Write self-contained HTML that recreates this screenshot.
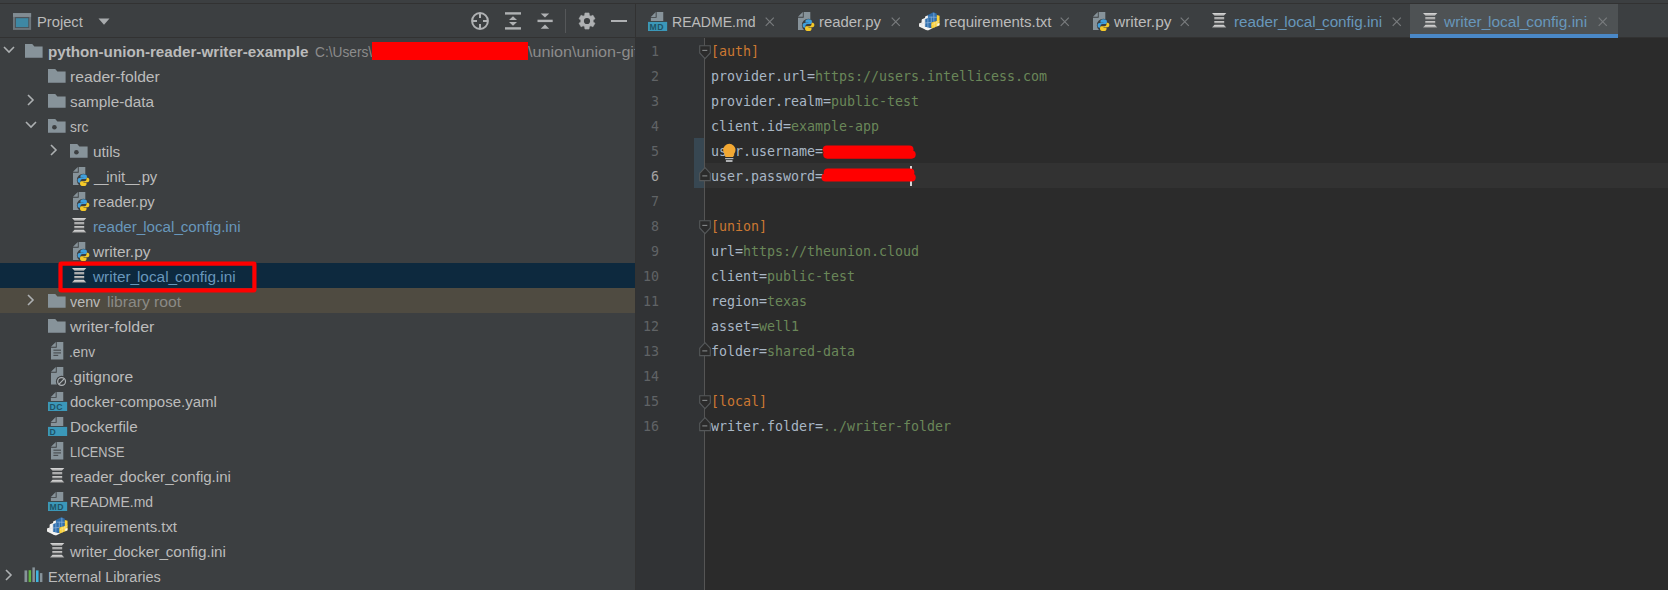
<!DOCTYPE html>
<html lang="en"><head><meta charset="utf-8"><title>PyCharm - writer_local_config.ini</title>
<style>
html,body{margin:0;padding:0}
body{width:1668px;height:590px;overflow:hidden;background:#3c3f41;position:relative;font:15.5px "Liberation Sans",sans-serif;}
.a{position:absolute;display:block}
.t{position:absolute;white-space:pre;font:15.5px "Liberation Sans",sans-serif;line-height:25px;height:25px;transform-origin:0 0}
.ln{position:absolute;left:636px;width:23px;text-align:right;font:13.3px "DejaVu Sans Mono","Liberation Mono",monospace;line-height:25px;height:25px;letter-spacing:-0.006px}
.code{position:absolute;left:711px;white-space:pre;font:13.3px "DejaVu Sans Mono","Liberation Mono",monospace;line-height:25px;height:25px;letter-spacing:-0.006px}
</style></head>
<body>
<div class="a" style="left:0;top:3px;width:1668px;height:1px;background:#323232"></div>
<div class="a" style="left:0;top:37px;width:1668px;height:1px;background:#323232"></div>
<div class="a" style="left:0;top:263px;width:635px;height:25px;background:#0d293e"></div>
<div class="a" style="left:0;top:288px;width:635px;height:25px;background:#4f4b41"></div>
<div class="a" style="left:372px;top:41.8px;width:156px;height:18px;background:#ff0000"></div>
<div class="a" style="left:528px;top:38px;width:106.5px;height:25px;overflow:hidden"><span class="t" style="left:0;top:1px;color:#8c8c8c;transform:scaleX(1.042)">\union\union-git</span></div>
<div class="a" style="left:635px;top:4px;width:1px;height:586px;background:#323232"></div>
<div class="a" style="left:636px;top:38px;width:68px;height:552px;background:#313335"></div>
<div class="a" style="left:705px;top:38px;width:963px;height:552px;background:#2b2b2b"></div>
<div class="a" style="left:704px;top:38px;width:1px;height:552px;background:#555555"></div>
<div class="a" style="left:705px;top:163px;width:963px;height:25px;background:#323232"></div>
<div class="a" style="left:694px;top:138px;width:10px;height:50px;background:#374752"></div>
<div class="a" style="left:1410px;top:4px;width:208px;height:34px;background:#4e5254"></div>
<div class="a" style="left:1410px;top:34px;width:208px;height:4px;background:#4a88c7"></div>
<svg class="a" style="left:13px;top:13px" width="19" height="17" viewBox="0 0 19 17"><rect x="0" y="0.1" width="18.1" height="16.8" fill="#6d767c"/><rect x="0" y="0.1" width="18.1" height="3.8" fill="#818c93"/><rect x="1.9" y="4.1" width="14.3" height="10.9" fill="#4b5257"/><rect x="2.9" y="5.2" width="12.4" height="8.9" fill="#3e88a4"/></svg>
<svg class="a" style="left:98px;top:18px" width="12" height="7" viewBox="0 0 12 7"><path d="M0.5 0.5H11.5L6 6.8Z" fill="#a8abad"/></svg>
<svg class="a" style="left:470px;top:11px" width="20" height="20" viewBox="0 0 20 20"><circle cx="10" cy="10" r="7.9" fill="none" stroke="#afb1b3" stroke-width="2"/><path d="M10 2V7M10 13V18M2 10H7M13 10H18" stroke="#afb1b3" stroke-width="2"/></svg>
<svg class="a" style="left:505px;top:12px" width="16" height="18" viewBox="0 0 16 18"><rect x="0" y="0.2" width="16" height="2.4" fill="#afb1b3"/><rect x="0" y="15.2" width="16" height="2.4" fill="#afb1b3"/><path d="M8 4.3L12 8H4Z" fill="#afb1b3"/><path d="M4 10H12L8 13.7Z" fill="#afb1b3"/></svg>
<svg class="a" style="left:537px;top:13px" width="16" height="16" viewBox="0 0 16 16"><rect x="0.5" y="6.7" width="15.2" height="2.4" fill="#afb1b3"/><path d="M3.7 0.5H12.2L8 4.6Z" fill="#afb1b3"/><path d="M8 11.5L12.2 15.8H3.7Z" fill="#afb1b3"/></svg>
<div class="a" style="left:565px;top:9px;width:1px;height:24px;background:#555759"></div>
<svg class="a" style="left:578px;top:12px" width="18" height="18" viewBox="0 0 18 18"><path d="M6.95 0.96L11.05 0.96L11.3 3.24L12.84 4.13L14.94 3.2L16.99 6.76L15.14 8.11L15.14 9.89L16.99 11.24L14.94 14.8L12.84 13.87L11.3 14.76L11.05 17.04L6.95 17.04L6.7 14.76L5.16 13.87L3.06 14.8L1.01 11.24L2.86 9.89L2.86 8.11L1.01 6.76L3.06 3.2L5.16 4.13L6.7 3.24Z" fill="#afb1b3" stroke="#afb1b3" stroke-width="0.6" stroke-linejoin="round"/><circle cx="9" cy="9" r="3.1" fill="#3c3f41"/></svg>
<div class="a" style="left:611.4px;top:19.6px;width:15.3px;height:2.4px;background:#afb1b3"></div>
<svg class="a" style="left:2.8px;top:46px" width="12" height="8" viewBox="0 0 12 8"><path d="M1 1L6 6L11 1" fill="none" stroke="#adb0b2" stroke-width="1.6"/></svg>
<svg class="a" style="left:25.2px;top:43.8px" width="18" height="14" viewBox="0 0 18 14"><path d="M0 0H7.2L9.4 2.6H17.6V13.8H0Z" fill="#87939a"/></svg>
<svg class="a" style="left:48.2px;top:68.8px" width="18" height="14" viewBox="0 0 18 14"><path d="M0 0H7.2L9.4 2.6H17.6V13.8H0Z" fill="#87939a"/></svg>
<svg class="a" style="left:26.5px;top:94px" width="8" height="12" viewBox="0 0 8 12"><path d="M1 1L6 6L1 11" fill="none" stroke="#adb0b2" stroke-width="1.6"/></svg>
<svg class="a" style="left:48.2px;top:93.8px" width="18" height="14" viewBox="0 0 18 14"><path d="M0 0H7.2L9.4 2.6H17.6V13.8H0Z" fill="#87939a"/></svg>
<svg class="a" style="left:24.8px;top:121.2px" width="12" height="8" viewBox="0 0 12 8"><path d="M1 1L6 6L11 1" fill="none" stroke="#adb0b2" stroke-width="1.6"/></svg>
<svg class="a" style="left:48.2px;top:118.8px" width="18" height="14" viewBox="0 0 18 14"><path d="M0 0H7.2L9.4 2.6H17.6V13.8H0Z" fill="#87939a"/><circle cx="6.4" cy="8.2" r="2.3" fill="#3c3f41"/></svg>
<svg class="a" style="left:49.5px;top:144px" width="8" height="12" viewBox="0 0 8 12"><path d="M1 1L6 6L1 11" fill="none" stroke="#adb0b2" stroke-width="1.6"/></svg>
<svg class="a" style="left:70.4px;top:143.8px" width="18" height="14" viewBox="0 0 18 14"><path d="M0 0H7.2L9.4 2.6H17.6V13.8H0Z" fill="#87939a"/><circle cx="6.4" cy="8.2" r="2.3" fill="#3c3f41"/></svg>
<svg class="a" style="left:72.9px;top:167px" width="18" height="20" viewBox="0 0 18 20"><path d="M5.7 0H12.3V18H0V5.7H5.7Z" fill="#87939a"/><path d="M4.8 0V4.8H0Z" fill="#87939a"/><circle cx="10.4" cy="13.2" r="6.5" fill="#3c3f41"/><g transform="translate(4.6 7.2) scale(0.98)"><path d="M5.9 0C3.5 0 2.9 1 2.9 2.1V3.5H6V4H1.9C0.6 4 0 5 0 6.2C0 7.7 0.7 8.6 1.9 8.6H2.9V7C2.9 5.9 3.8 5 5 5H7.9C8.8 5 9.5 4.3 9.5 3.4V2.1C9.5 1 8.5 0 5.9 0Z" fill="#3f9fdc"/><path d="M5.9 0C3.5 0 2.9 1 2.9 2.1V3.5H6V4H1.9C0.6 4 0 5 0 6.2C0 7.7 0.7 8.6 1.9 8.6H2.9V7C2.9 5.9 3.8 5 5 5H7.9C8.8 5 9.5 4.3 9.5 3.4V2.1C9.5 1 8.5 0 5.9 0Z" fill="#f5c928" transform="rotate(180 6 6.05)"/></g></svg>
<svg class="a" style="left:72.9px;top:192px" width="18" height="20" viewBox="0 0 18 20"><path d="M5.7 0H12.3V18H0V5.7H5.7Z" fill="#87939a"/><path d="M4.8 0V4.8H0Z" fill="#87939a"/><circle cx="10.4" cy="13.2" r="6.5" fill="#3c3f41"/><g transform="translate(4.6 7.2) scale(0.98)"><path d="M5.9 0C3.5 0 2.9 1 2.9 2.1V3.5H6V4H1.9C0.6 4 0 5 0 6.2C0 7.7 0.7 8.6 1.9 8.6H2.9V7C2.9 5.9 3.8 5 5 5H7.9C8.8 5 9.5 4.3 9.5 3.4V2.1C9.5 1 8.5 0 5.9 0Z" fill="#3f9fdc"/><path d="M5.9 0C3.5 0 2.9 1 2.9 2.1V3.5H6V4H1.9C0.6 4 0 5 0 6.2C0 7.7 0.7 8.6 1.9 8.6H2.9V7C2.9 5.9 3.8 5 5 5H7.9C8.8 5 9.5 4.3 9.5 3.4V2.1C9.5 1 8.5 0 5.9 0Z" fill="#f5c928" transform="rotate(180 6 6.05)"/></g></svg>
<svg class="a" style="left:71.8px;top:218.2px" width="15" height="15" viewBox="0 0 15 15"><defs><linearGradient id="ig" x1="0" y1="0" x2="0" y2="1"><stop offset="0" stop-color="#d2d2d2"/><stop offset="1" stop-color="#8e8e8e"/></linearGradient><linearGradient id="ih" x1="0" y1="0" x2="0" y2="1"><stop offset="0" stop-color="#dcdcdc"/><stop offset="1" stop-color="#a4a4a4"/></linearGradient></defs><path d="M0 0H14.3L11.8 2.7H2.5Z" fill="url(#ih)"/><rect x="2.3" y="4.2" width="9.9" height="2.3" fill="url(#ig)"/><rect x="2.3" y="8" width="9.9" height="2.3" fill="url(#ig)"/><path d="M2.5 11.8H11.8L14.3 14.5H0Z" fill="url(#ih)"/></svg>
<svg class="a" style="left:72.9px;top:242px" width="18" height="20" viewBox="0 0 18 20"><path d="M5.7 0H12.3V18H0V5.7H5.7Z" fill="#87939a"/><path d="M4.8 0V4.8H0Z" fill="#87939a"/><circle cx="10.4" cy="13.2" r="6.5" fill="#3c3f41"/><g transform="translate(4.6 7.2) scale(0.98)"><path d="M5.9 0C3.5 0 2.9 1 2.9 2.1V3.5H6V4H1.9C0.6 4 0 5 0 6.2C0 7.7 0.7 8.6 1.9 8.6H2.9V7C2.9 5.9 3.8 5 5 5H7.9C8.8 5 9.5 4.3 9.5 3.4V2.1C9.5 1 8.5 0 5.9 0Z" fill="#3f9fdc"/><path d="M5.9 0C3.5 0 2.9 1 2.9 2.1V3.5H6V4H1.9C0.6 4 0 5 0 6.2C0 7.7 0.7 8.6 1.9 8.6H2.9V7C2.9 5.9 3.8 5 5 5H7.9C8.8 5 9.5 4.3 9.5 3.4V2.1C9.5 1 8.5 0 5.9 0Z" fill="#f5c928" transform="rotate(180 6 6.05)"/></g></svg>
<svg class="a" style="left:71.8px;top:268.2px" width="15" height="15" viewBox="0 0 15 15"><defs><linearGradient id="ig" x1="0" y1="0" x2="0" y2="1"><stop offset="0" stop-color="#d2d2d2"/><stop offset="1" stop-color="#8e8e8e"/></linearGradient><linearGradient id="ih" x1="0" y1="0" x2="0" y2="1"><stop offset="0" stop-color="#dcdcdc"/><stop offset="1" stop-color="#a4a4a4"/></linearGradient></defs><path d="M0 0H14.3L11.8 2.7H2.5Z" fill="url(#ih)"/><rect x="2.3" y="4.2" width="9.9" height="2.3" fill="url(#ig)"/><rect x="2.3" y="8" width="9.9" height="2.3" fill="url(#ig)"/><path d="M2.5 11.8H11.8L14.3 14.5H0Z" fill="url(#ih)"/></svg>
<svg class="a" style="left:26.5px;top:294px" width="8" height="12" viewBox="0 0 8 12"><path d="M1 1L6 6L1 11" fill="none" stroke="#adb0b2" stroke-width="1.6"/></svg>
<svg class="a" style="left:48.2px;top:293.8px" width="18" height="14" viewBox="0 0 18 14"><path d="M0 0H7.2L9.4 2.6H17.6V13.8H0Z" fill="#87939a"/></svg>
<svg class="a" style="left:48.2px;top:318.8px" width="18" height="14" viewBox="0 0 18 14"><path d="M0 0H7.2L9.4 2.6H17.6V13.8H0Z" fill="#87939a"/></svg>
<svg class="a" style="left:50.8px;top:342.2px" width="13" height="18" viewBox="0 0 13 18"><path d="M5.7 0H12.3V17.6H0V5.7H5.7Z" fill="#87939a"/><path d="M4.8 0V4.8H0Z" fill="#87939a"/><rect x="2.4" y="7.6" width="7.6" height="1.2" fill="#3c3f41" opacity=".8"/><rect x="2.4" y="10.3" width="7.6" height="1.2" fill="#3c3f41" opacity=".8"/><rect x="2.4" y="12.8" width="4.8" height="1.2" fill="#3c3f41" opacity=".8"/></svg>
<svg class="a" style="left:50.8px;top:367.2px" width="17" height="21" viewBox="0 0 17 21"><path d="M5.7 0H12.3V17.6H0V5.7H5.7Z" fill="#87939a"/><path d="M4.8 0V4.8H0Z" fill="#87939a"/><circle cx="10.6" cy="14.5" r="5.7" fill="#3c3f41"/><circle cx="10.6" cy="14.5" r="3.9" fill="none" stroke="#aeb3b6" stroke-width="1.2"/><path d="M8 17.2L13.2 11.8" stroke="#aeb3b6" stroke-width="1.2"/></svg>
<svg class="a" style="left:48px;top:392.2px" width="20" height="19" viewBox="0 0 20 19"><path d="M8.6 0H15.25V8.9H2.85V5.7H8.6Z" fill="#87939a"/><path d="M7.7 0V4.9H2.85Z" fill="#87939a"/><rect x="0" y="9.9" width="19.15" height="9.1" fill="#3b98b9"/><text x="1.6" y="17.5" font-family="Liberation Sans, sans-serif" font-weight="bold" font-size="8.7" letter-spacing="0.35" fill="#1f5266">DC</text></svg>
<svg class="a" style="left:48px;top:417.2px" width="20" height="19" viewBox="0 0 20 19"><path d="M8.6 0H15.25V8.9H2.85V5.7H8.6Z" fill="#87939a"/><path d="M7.7 0V4.9H2.85Z" fill="#87939a"/><rect x="0" y="9.9" width="19.15" height="9.1" fill="#3b98b9"/><text x="1.6" y="17.5" font-family="Liberation Sans, sans-serif" font-weight="bold" font-size="8.7" letter-spacing="0.35" fill="#1f5266">D</text></svg>
<svg class="a" style="left:50.8px;top:442.2px" width="13" height="18" viewBox="0 0 13 18"><path d="M5.7 0H12.3V17.6H0V5.7H5.7Z" fill="#87939a"/><path d="M4.8 0V4.8H0Z" fill="#87939a"/><rect x="2.4" y="7.6" width="7.6" height="1.2" fill="#3c3f41" opacity=".8"/><rect x="2.4" y="10.3" width="7.6" height="1.2" fill="#3c3f41" opacity=".8"/><rect x="2.4" y="12.8" width="4.8" height="1.2" fill="#3c3f41" opacity=".8"/></svg>
<svg class="a" style="left:49.8px;top:468.2px" width="15" height="15" viewBox="0 0 15 15"><defs><linearGradient id="ig" x1="0" y1="0" x2="0" y2="1"><stop offset="0" stop-color="#d2d2d2"/><stop offset="1" stop-color="#8e8e8e"/></linearGradient><linearGradient id="ih" x1="0" y1="0" x2="0" y2="1"><stop offset="0" stop-color="#dcdcdc"/><stop offset="1" stop-color="#a4a4a4"/></linearGradient></defs><path d="M0 0H14.3L11.8 2.7H2.5Z" fill="url(#ih)"/><rect x="2.3" y="4.2" width="9.9" height="2.3" fill="url(#ig)"/><rect x="2.3" y="8" width="9.9" height="2.3" fill="url(#ig)"/><path d="M2.5 11.8H11.8L14.3 14.5H0Z" fill="url(#ih)"/></svg>
<svg class="a" style="left:48px;top:492.2px" width="20" height="19" viewBox="0 0 20 19"><path d="M8.6 0H15.25V8.9H2.85V5.7H8.6Z" fill="#87939a"/><path d="M7.7 0V4.9H2.85Z" fill="#87939a"/><rect x="0" y="9.9" width="19.15" height="9.1" fill="#3b98b9"/><text x="1.6" y="17.5" font-family="Liberation Sans, sans-serif" font-weight="bold" font-size="8.7" letter-spacing="0.35" fill="#1f5266">MD</text></svg>
<svg class="a" style="left:46.7px;top:516.8px" width="22" height="19" viewBox="0 0 22 19"><polygon points="0,11.44 2.75,10.38 2.97,7.2 5.93,5.93 6.36,4.24 9.32,3.18 9.32,16.53 7.63,18.22 0,14.41" fill="#f3f3f1"/><polygon points="5.93,14.41 12.29,15.89 13.14,16.53 8.9,18.43 5.93,16.95" fill="#f3f3f1"/><polygon points="8.9,2.97 14.41,0.21 17.8,1.69 17.8,8.9 12.29,10.59 12.29,16.1 5.93,14.83 5.93,7.2 8.9,5.93" fill="#2f6fad"/><polygon points="17.8,2.97 20.55,3.81 20.55,13.14 13.14,16.53 12.29,16.1 12.29,10.59 17.8,8.9" fill="#fbd23a"/><polygon points="18.22,11.86 20.42,11.1 20.42,13.14 18.22,14.32" fill="#f7f7f7"/><path d="M5.93,11.02L12.29,10.38M8.9,6.14V16.1M12.29,4.66V10.59M14.83,0.85V9.75M9.32,5.08L17.8,5.3" stroke="#8fb4dc" stroke-width="0.7" fill="none"/><path d="M15.25,9.75V15.47M17.8,8.9V14.41M12.29,13.14L20.55,8.9" stroke="#f0e2a0" stroke-width="0.6" fill="none"/><path d="M2.97,7.63V15.68M5.93,6.36V14.41M0,12.92L5.93,10.59" stroke="#dcdcdc" stroke-width="0.6" fill="none"/></svg>
<svg class="a" style="left:49.8px;top:543.2px" width="15" height="15" viewBox="0 0 15 15"><defs><linearGradient id="ig" x1="0" y1="0" x2="0" y2="1"><stop offset="0" stop-color="#d2d2d2"/><stop offset="1" stop-color="#8e8e8e"/></linearGradient><linearGradient id="ih" x1="0" y1="0" x2="0" y2="1"><stop offset="0" stop-color="#dcdcdc"/><stop offset="1" stop-color="#a4a4a4"/></linearGradient></defs><path d="M0 0H14.3L11.8 2.7H2.5Z" fill="url(#ih)"/><rect x="2.3" y="4.2" width="9.9" height="2.3" fill="url(#ig)"/><rect x="2.3" y="8" width="9.9" height="2.3" fill="url(#ig)"/><path d="M2.5 11.8H11.8L14.3 14.5H0Z" fill="url(#ih)"/></svg>
<svg class="a" style="left:4.5px;top:568.9px" width="8" height="12" viewBox="0 0 8 12"><path d="M1 1L6 6L1 11" fill="none" stroke="#adb0b2" stroke-width="1.6"/></svg>
<svg class="a" style="left:24.1px;top:566.7px" width="19" height="16" viewBox="0 0 19 16"><rect x="0.5" y="3.4" width="2.7" height="11.65" fill="#87939a"/><rect x="4.6" y="3.2" width="2.5" height="11.85" fill="#62b543"/><rect x="8.4" y="0.4" width="2.5" height="14.65" fill="#87939a"/><rect x="12" y="3.4" width="2.55" height="11.65" fill="#40b6e0"/><rect x="15.95" y="6.1" width="2.45" height="8.95" fill="#87939a"/></svg>
<svg class="a" style="left:648px;top:12.2px" width="20" height="19" viewBox="0 0 20 19"><path d="M8.6 0H15.25V8.9H2.85V5.7H8.6Z" fill="#87939a"/><path d="M7.7 0V4.9H2.85Z" fill="#87939a"/><rect x="0" y="9.9" width="19.15" height="9.1" fill="#3b98b9"/><text x="1.6" y="17.5" font-family="Liberation Sans, sans-serif" font-weight="bold" font-size="8.7" letter-spacing="0.35" fill="#1f5266">MD</text></svg>
<svg class="a" style="left:797.6px;top:12.2px" width="18" height="20" viewBox="0 0 18 20"><path d="M5.7 0H12.3V18H0V5.7H5.7Z" fill="#87939a"/><path d="M4.8 0V4.8H0Z" fill="#87939a"/><circle cx="10.4" cy="13.2" r="6.5" fill="#3c3f41"/><g transform="translate(4.6 7.2) scale(0.98)"><path d="M5.9 0C3.5 0 2.9 1 2.9 2.1V3.5H6V4H1.9C0.6 4 0 5 0 6.2C0 7.7 0.7 8.6 1.9 8.6H2.9V7C2.9 5.9 3.8 5 5 5H7.9C8.8 5 9.5 4.3 9.5 3.4V2.1C9.5 1 8.5 0 5.9 0Z" fill="#3f9fdc"/><path d="M5.9 0C3.5 0 2.9 1 2.9 2.1V3.5H6V4H1.9C0.6 4 0 5 0 6.2C0 7.7 0.7 8.6 1.9 8.6H2.9V7C2.9 5.9 3.8 5 5 5H7.9C8.8 5 9.5 4.3 9.5 3.4V2.1C9.5 1 8.5 0 5.9 0Z" fill="#f5c928" transform="rotate(180 6 6.05)"/></g></svg>
<svg class="a" style="left:918.5px;top:12.3px" width="22" height="19" viewBox="0 0 22 19"><polygon points="0,11.44 2.75,10.38 2.97,7.2 5.93,5.93 6.36,4.24 9.32,3.18 9.32,16.53 7.63,18.22 0,14.41" fill="#f3f3f1"/><polygon points="5.93,14.41 12.29,15.89 13.14,16.53 8.9,18.43 5.93,16.95" fill="#f3f3f1"/><polygon points="8.9,2.97 14.41,0.21 17.8,1.69 17.8,8.9 12.29,10.59 12.29,16.1 5.93,14.83 5.93,7.2 8.9,5.93" fill="#2f6fad"/><polygon points="17.8,2.97 20.55,3.81 20.55,13.14 13.14,16.53 12.29,16.1 12.29,10.59 17.8,8.9" fill="#fbd23a"/><polygon points="18.22,11.86 20.42,11.1 20.42,13.14 18.22,14.32" fill="#f7f7f7"/><path d="M5.93,11.02L12.29,10.38M8.9,6.14V16.1M12.29,4.66V10.59M14.83,0.85V9.75M9.32,5.08L17.8,5.3" stroke="#8fb4dc" stroke-width="0.7" fill="none"/><path d="M15.25,9.75V15.47M17.8,8.9V14.41M12.29,13.14L20.55,8.9" stroke="#f0e2a0" stroke-width="0.6" fill="none"/><path d="M2.97,7.63V15.68M5.93,6.36V14.41M0,12.92L5.93,10.59" stroke="#dcdcdc" stroke-width="0.6" fill="none"/></svg>
<svg class="a" style="left:1092.6px;top:12.2px" width="18" height="20" viewBox="0 0 18 20"><path d="M5.7 0H12.3V18H0V5.7H5.7Z" fill="#87939a"/><path d="M4.8 0V4.8H0Z" fill="#87939a"/><circle cx="10.4" cy="13.2" r="6.5" fill="#3c3f41"/><g transform="translate(4.6 7.2) scale(0.98)"><path d="M5.9 0C3.5 0 2.9 1 2.9 2.1V3.5H6V4H1.9C0.6 4 0 5 0 6.2C0 7.7 0.7 8.6 1.9 8.6H2.9V7C2.9 5.9 3.8 5 5 5H7.9C8.8 5 9.5 4.3 9.5 3.4V2.1C9.5 1 8.5 0 5.9 0Z" fill="#3f9fdc"/><path d="M5.9 0C3.5 0 2.9 1 2.9 2.1V3.5H6V4H1.9C0.6 4 0 5 0 6.2C0 7.7 0.7 8.6 1.9 8.6H2.9V7C2.9 5.9 3.8 5 5 5H7.9C8.8 5 9.5 4.3 9.5 3.4V2.1C9.5 1 8.5 0 5.9 0Z" fill="#f5c928" transform="rotate(180 6 6.05)"/></g></svg>
<svg class="a" style="left:1211.8px;top:13.1px" width="15" height="15" viewBox="0 0 15 15"><defs><linearGradient id="ig" x1="0" y1="0" x2="0" y2="1"><stop offset="0" stop-color="#d2d2d2"/><stop offset="1" stop-color="#8e8e8e"/></linearGradient><linearGradient id="ih" x1="0" y1="0" x2="0" y2="1"><stop offset="0" stop-color="#dcdcdc"/><stop offset="1" stop-color="#a4a4a4"/></linearGradient></defs><path d="M0 0H14.3L11.8 2.7H2.5Z" fill="url(#ih)"/><rect x="2.3" y="4.2" width="9.9" height="2.3" fill="url(#ig)"/><rect x="2.3" y="8" width="9.9" height="2.3" fill="url(#ig)"/><path d="M2.5 11.8H11.8L14.3 14.5H0Z" fill="url(#ih)"/></svg>
<svg class="a" style="left:1422.8px;top:13.1px" width="15" height="15" viewBox="0 0 15 15"><defs><linearGradient id="ig" x1="0" y1="0" x2="0" y2="1"><stop offset="0" stop-color="#d2d2d2"/><stop offset="1" stop-color="#8e8e8e"/></linearGradient><linearGradient id="ih" x1="0" y1="0" x2="0" y2="1"><stop offset="0" stop-color="#dcdcdc"/><stop offset="1" stop-color="#a4a4a4"/></linearGradient></defs><path d="M0 0H14.3L11.8 2.7H2.5Z" fill="url(#ih)"/><rect x="2.3" y="4.2" width="9.9" height="2.3" fill="url(#ig)"/><rect x="2.3" y="8" width="9.9" height="2.3" fill="url(#ig)"/><path d="M2.5 11.8H11.8L14.3 14.5H0Z" fill="url(#ih)"/></svg>
<svg class="a" style="left:765.3px;top:17px" width="10" height="10" viewBox="0 0 10 10"><path d="M0.7 0.7L8.8 8.8M8.8 0.7L0.7 8.8" stroke="#787b7d" stroke-width="1.2"/></svg>
<svg class="a" style="left:890.8px;top:17px" width="10" height="10" viewBox="0 0 10 10"><path d="M0.7 0.7L8.8 8.8M8.8 0.7L0.7 8.8" stroke="#787b7d" stroke-width="1.2"/></svg>
<svg class="a" style="left:1060.3px;top:17px" width="10" height="10" viewBox="0 0 10 10"><path d="M0.7 0.7L8.8 8.8M8.8 0.7L0.7 8.8" stroke="#787b7d" stroke-width="1.2"/></svg>
<svg class="a" style="left:1180.3px;top:17px" width="10" height="10" viewBox="0 0 10 10"><path d="M0.7 0.7L8.8 8.8M8.8 0.7L0.7 8.8" stroke="#787b7d" stroke-width="1.2"/></svg>
<svg class="a" style="left:1392.2px;top:17px" width="10" height="10" viewBox="0 0 10 10"><path d="M0.7 0.7L8.8 8.8M8.8 0.7L0.7 8.8" stroke="#787b7d" stroke-width="1.2"/></svg>
<svg class="a" style="left:1598.4px;top:17px" width="10" height="10" viewBox="0 0 10 10"><path d="M0.7 0.7L8.8 8.8M8.8 0.7L0.7 8.8" stroke="#787b7d" stroke-width="1.2"/></svg>
<span class="t" style="left:47.8px;top:39px;color:#bbbbbb;font-weight:bold;transform:scaleX(0.979)">python-union-reader-writer-example</span>
<span class="t" style="left:314.7px;top:39px;color:#8c8c8c;transform:scaleX(0.884)">C:\Users\</span>
<span class="t" style="left:69.8px;top:64px;color:#bbbbbb;transform:scaleX(1.012)">reader-folder</span>
<span class="t" style="left:69.8px;top:89px;color:#bbbbbb;transform:scaleX(0.985)">sample-data</span>
<span class="t" style="left:69.8px;top:114px;color:#bbbbbb;transform:scaleX(0.89)">src</span>
<span class="t" style="left:93px;top:139px;color:#bbbbbb;transform:scaleX(0.99)">utils</span>
<span class="t" style="left:93.6px;top:164px;color:#bbbbbb;transform:scaleX(0.956)"><span style="letter-spacing:-2.2px">__</span>init<span style="letter-spacing:-2.2px">__</span>.py</span>
<span class="t" style="left:93px;top:189px;color:#bbbbbb;transform:scaleX(0.956)">reader.py</span>
<span class="t" style="left:93px;top:214px;color:#6897bb;transform:scaleX(0.979)">reader<span style="letter-spacing:-2.2px">_</span>local<span style="letter-spacing:-2.2px">_</span>config.ini</span>
<span class="t" style="left:92.6px;top:239px;color:#bbbbbb;transform:scaleX(0.995)">writer.py</span>
<span class="t" style="left:93px;top:264px;color:#6897bb;transform:scaleX(0.992)">writer<span style="letter-spacing:-2.2px">_</span>local<span style="letter-spacing:-2.2px">_</span>config.ini</span>
<span class="t" style="left:69.8px;top:289px;color:#bbbbbb;transform:scaleX(0.925)">venv</span>
<span class="t" style="left:106.9px;top:289px;color:#8a8a86;transform:scaleX(1.013)">library root</span>
<span class="t" style="left:69.8px;top:314px;color:#bbbbbb;transform:scaleX(1.031)">writer-folder</span>
<span class="t" style="left:69.2px;top:339px;color:#bbbbbb;transform:scaleX(0.89)">.env</span>
<span class="t" style="left:69.2px;top:364px;color:#bbbbbb;transform:scaleX(1.007)">.gitignore</span>
<span class="t" style="left:69.8px;top:389px;color:#bbbbbb;transform:scaleX(0.969)">docker-compose.yaml</span>
<span class="t" style="left:70.4px;top:414px;color:#bbbbbb;transform:scaleX(0.982)">Dockerfile</span>
<span class="t" style="left:70.4px;top:439px;color:#bbbbbb;transform:scaleX(0.823)">LICENSE</span>
<span class="t" style="left:69.8px;top:464px;color:#bbbbbb;transform:scaleX(0.973)">reader<span style="letter-spacing:-2.2px">_</span>docker<span style="letter-spacing:-2.2px">_</span>config.ini</span>
<span class="t" style="left:70.4px;top:489px;color:#bbbbbb;transform:scaleX(0.901)">README.md</span>
<span class="t" style="left:69.8px;top:514px;color:#bbbbbb;transform:scaleX(0.963)">requirements.txt</span>
<span class="t" style="left:69.8px;top:539px;color:#bbbbbb;transform:scaleX(0.984)">writer<span style="letter-spacing:-2.2px">_</span>docker<span style="letter-spacing:-2.2px">_</span>config.ini</span>
<span class="t" style="left:48.3px;top:564px;color:#bbbbbb;transform:scaleX(0.935)">External Libraries</span>
<span class="t" style="left:37.2px;top:9px;color:#bbbbbb;transform:scaleX(0.949)">Project</span>
<span class="t" style="left:672.2px;top:9px;color:#bbbbbb;transform:scaleX(0.906)">README.md</span>
<span class="t" style="left:819px;top:9px;color:#bbbbbb;transform:scaleX(0.959)">reader.py</span>
<span class="t" style="left:943.7px;top:9px;color:#bbbbbb;transform:scaleX(0.967)">requirements.txt</span>
<span class="t" style="left:1113.9px;top:9px;color:#bbbbbb;transform:scaleX(0.995)">writer.py</span>
<span class="t" style="left:1233.6px;top:9px;color:#6897bb;transform:scaleX(0.983)">reader<span style="letter-spacing:-2.2px">_</span>local<span style="letter-spacing:-2.2px">_</span>config.ini</span>
<span class="t" style="left:1444.4px;top:9px;color:#6897bb;transform:scaleX(0.995)">writer<span style="letter-spacing:-2.2px">_</span>local<span style="letter-spacing:-2.2px">_</span>config.ini</span>
<span class="ln" style="top:39px;color:#606366">1</span>
<span class="code" style="top:39px"><span style="color:#cc7832">[auth]</span></span>
<span class="ln" style="top:64px;color:#606366">2</span>
<span class="code" style="top:64px"><span style="color:#a9b7c6">provider.url=</span><span style="color:#6a8759">https://users.intellicess.com</span></span>
<span class="ln" style="top:89px;color:#606366">3</span>
<span class="code" style="top:89px"><span style="color:#a9b7c6">provider.realm=</span><span style="color:#6a8759">public-test</span></span>
<span class="ln" style="top:114px;color:#606366">4</span>
<span class="code" style="top:114px"><span style="color:#a9b7c6">client.id=</span><span style="color:#6a8759">example-app</span></span>
<span class="ln" style="top:139px;color:#606366">5</span>
<span class="code" style="top:139px"><span style="color:#a9b7c6">user.username=</span></span>
<span class="ln" style="top:164px;color:#a4a3a3">6</span>
<span class="code" style="top:164px"><span style="color:#a9b7c6">user.password=</span></span>
<span class="ln" style="top:189px;color:#606366">7</span>
<span class="ln" style="top:214px;color:#606366">8</span>
<span class="code" style="top:214px"><span style="color:#cc7832">[union]</span></span>
<span class="ln" style="top:239px;color:#606366">9</span>
<span class="code" style="top:239px"><span style="color:#a9b7c6">url=</span><span style="color:#6a8759">https://theunion.cloud</span></span>
<span class="ln" style="top:264px;color:#606366">10</span>
<span class="code" style="top:264px"><span style="color:#a9b7c6">client=</span><span style="color:#6a8759">public-test</span></span>
<span class="ln" style="top:289px;color:#606366">11</span>
<span class="code" style="top:289px"><span style="color:#a9b7c6">region=</span><span style="color:#6a8759">texas</span></span>
<span class="ln" style="top:314px;color:#606366">12</span>
<span class="code" style="top:314px"><span style="color:#a9b7c6">asset=</span><span style="color:#6a8759">well1</span></span>
<span class="ln" style="top:339px;color:#606366">13</span>
<span class="code" style="top:339px"><span style="color:#a9b7c6">folder=</span><span style="color:#6a8759">shared-data</span></span>
<span class="ln" style="top:364px;color:#606366">14</span>
<span class="ln" style="top:389px;color:#606366">15</span>
<span class="code" style="top:389px"><span style="color:#cc7832">[local]</span></span>
<span class="ln" style="top:414px;color:#606366">16</span>
<span class="code" style="top:414px"><span style="color:#a9b7c6">writer.folder=</span><span style="color:#6a8759">../writer-folder</span></span>
<svg class="a" style="left:698.5px;top:45px" width="12" height="15" viewBox="0 0 12 15"><path d="M0.7 0.7H11.3V8L6 13.6L0.7 8Z" fill="#2b2b2b" stroke="#55585a" stroke-width="1.1"/><path d="M3.3 5.4H8.3" stroke="#85888a" stroke-width="1.1"/></svg>
<svg class="a" style="left:698.5px;top:167px" width="12" height="15" viewBox="0 0 12 15"><path d="M0.7 13.6H11.3V6.3L6 0.7L0.7 6.3Z" fill="#2b2b2b" stroke="#55585a" stroke-width="1.1"/><path d="M3.3 8.9H8.3" stroke="#85888a" stroke-width="1.1"/></svg>
<svg class="a" style="left:698.5px;top:220px" width="12" height="15" viewBox="0 0 12 15"><path d="M0.7 0.7H11.3V8L6 13.6L0.7 8Z" fill="#2b2b2b" stroke="#55585a" stroke-width="1.1"/><path d="M3.3 5.4H8.3" stroke="#85888a" stroke-width="1.1"/></svg>
<svg class="a" style="left:698.5px;top:342px" width="12" height="15" viewBox="0 0 12 15"><path d="M0.7 13.6H11.3V6.3L6 0.7L0.7 6.3Z" fill="#2b2b2b" stroke="#55585a" stroke-width="1.1"/><path d="M3.3 8.9H8.3" stroke="#85888a" stroke-width="1.1"/></svg>
<svg class="a" style="left:698.5px;top:395px" width="12" height="15" viewBox="0 0 12 15"><path d="M0.7 0.7H11.3V8L6 13.6L0.7 8Z" fill="#2b2b2b" stroke="#55585a" stroke-width="1.1"/><path d="M3.3 5.4H8.3" stroke="#85888a" stroke-width="1.1"/></svg>
<svg class="a" style="left:698.5px;top:417px" width="12" height="15" viewBox="0 0 12 15"><path d="M0.7 13.6H11.3V6.3L6 0.7L0.7 6.3Z" fill="#2b2b2b" stroke="#55585a" stroke-width="1.1"/><path d="M3.3 8.9H8.3" stroke="#85888a" stroke-width="1.1"/></svg>
<div class="a" style="left:909.9px;top:165.8px;width:2px;height:20.2px;background:#d4d4d4"></div>
<svg class="a" style="left:815px;top:140px" width="110" height="48" viewBox="815 140 110 48"><g stroke="#ff0000" stroke-width="8.2" stroke-linecap="round" fill="none"><path d="M826.9 149.6H909.4"/><path d="M827.3 154.6H911.6"/><path d="M827.8 172.5H910.3"/><path d="M825.6 177.5H911.6"/></g></svg>
<svg class="a" style="left:721.6px;top:143px" width="15" height="20" viewBox="0 0 15 20"><circle cx="7.3" cy="7.05" r="6.2" fill="#f2a833"/><path d="M2.4 10.5L3.4 14.1H11.2L12.2 10.5Z" fill="#f2a833"/><rect x="3.1" y="15.1" width="8.3" height="1.1" fill="#c3c5c7"/><rect x="3.9" y="17.1" width="6.6" height="1.8" fill="#bdbfc1"/></svg>
<svg class="a" style="left:56px;top:259px" width="204" height="36" viewBox="56 259 204 36"><rect x="60.5" y="263.6" width="193.9" height="26.7" rx="0.8" fill="none" stroke="#ff0000" stroke-width="4.2"/></svg>
</body></html>
